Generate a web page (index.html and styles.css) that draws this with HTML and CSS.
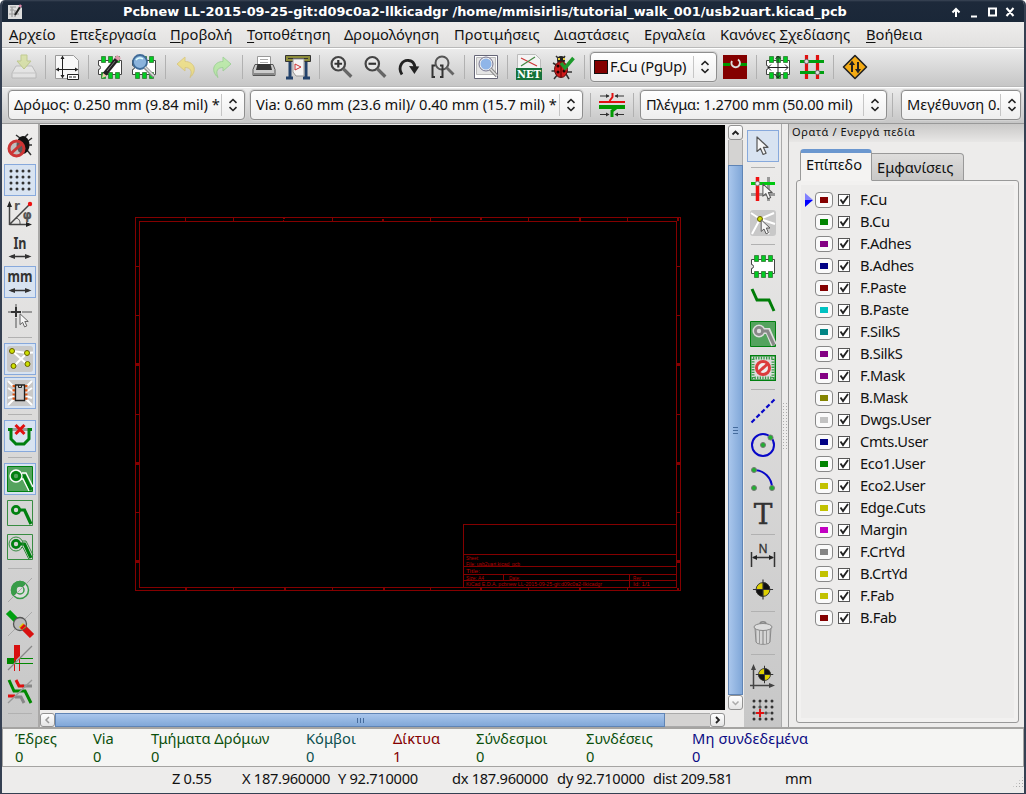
FILE: index.html
```
<!DOCTYPE html>
<html lang="el">
<head>
<meta charset="utf-8">
<title>Pcbnew</title>
<link rel="stylesheet" href="styles.css">
</head>
<body>
<svg class="defs" width="0" height="0">
  <defs>
    <symbol id="check" viewBox="0 0 14 14"><rect x="1.500" y="1.500" width="11" height="11" fill="#fff" stroke="#555"/><path d="M3.500 6.500L6 10l5-7" fill="none" stroke="#222" stroke-width="1.900"/></symbol>
    <symbol id="spin" viewBox="0 0 10 14"><path d="M1.500 4.800L5 1.500l3.500 3.300M1.500 9.200L5 12.500l3.500-3.300" fill="none" stroke="#222" stroke-width="1.600"/></symbol>
    <symbol id="target" viewBox="0 0 24 24"><circle cx="12" cy="12" r="7.200" fill="#ded000"/><path d="M12 12V4.500A7.500 7.500 0 0 1 19.500 12zM12 12v7.500A7.500 7.500 0 0 1 4.500 12z" fill="#111"/><path d="M12 1.500v21M1.500 12h21" stroke="#333" stroke-width="1.200"/><circle cx="12" cy="12" r="7.200" fill="none" stroke="#333"/></symbol>
    <symbol id="cursor" viewBox="0 0 14 20"><path d="M1 1v14.500l3.500-3 2.600 6 3-1.300-2.700-5.900H12z" fill="#f6f6f6" stroke="#555" stroke-width="1.200" stroke-linejoin="round"/></symbol>
    <symbol id="lens" viewBox="0 0 24 24"><circle cx="9.500" cy="9" r="6.200" fill="#eee" fill-opacity=".6" stroke="#454545" stroke-width="2"/><path d="M14 13.500l7.500 7.500" stroke="#666" stroke-width="3"/></symbol>
    <symbol id="chip" viewBox="0 0 26 26"><path d="M1.500 6.500h23v14h-23v-5a2 2 0 0 0 0-4z" fill="#fff" stroke="#444"/><g fill="#0c2" stroke="#373" stroke-width=".8"><path d="M4.500 2.500h4v6h-4zM11.500 2.500h4v6h-4zM18.500 2.500h4v6h-4zM4.500 18.500h4v6h-4zM11.500 18.500h4v6h-4zM18.500 18.500h4v6h-4z"/></g></symbol>
    <symbol id="zone" viewBox="0 0 26 26"><circle cx="9" cy="10" r="3.600" fill="none" stroke="currentColor" stroke-width="2.800"/><path d="M13 10h4.500L24 24" fill="none" stroke="currentColor" stroke-width="3.200"/></symbol>
  </defs>
</svg>
<div class="window">
  <header class="titlebar">
    <svg class="app-icon" viewBox="0 0 16 16"><path d="M1 1h11l3 3v11H1z" fill="#ddd"/><path d="M3 3h6M3 6h4M5 3v10M8 6v7M2 10h10" stroke="#999" stroke-width="1.200"/><path d="M13 3L8 11" stroke="#222" stroke-width="2"/><path d="M14 1l-1.500 2" stroke="#d8a" stroke-width="2.500"/></svg>
    <div class="title">Pcbnew LL-2015-09-25-git:d09c0a2-llkicadgr /home/mmisirlis/tutorial_walk_001/usb2uart.kicad_pcb</div>
    <svg class="win-controls" viewBox="0 0 66 12"><g fill="none" stroke="#fff" stroke-width="2"><path d="M5 11V3M1.500 6.500L5 3l3.500 3.500M20 10.500h6M38 2.500h7v7h-7zM55.500 2l7 8M62.500 2l-7 8"/></g></svg>
  </header>
  <nav class="menubar">
    <span><u>Α</u>ρχείο</span><span><u>Ε</u>πεξεργασία</span><span><u>Π</u>ροβολή</span><span><u>Τ</u>οποθέτηση</span><span>Δρομολόγηση</span><span>Προτιμήσεις</span><span>Δια<u>σ</u>τάσεις</span><span>Εργαλεία</span><span>Κανόνες <u>Σ</u>χεδίασης</span><span><u>Β</u>οήθεια</span>
  </nav>
  <div class="toolbar main-tools">
    <button class="tool faded"><svg viewBox="0 0 26 26"><path d="M5 12h16l4 7v5H1v-5z" fill="#eee" stroke="#aaa"/><path d="M1 19h24" stroke="#bbb"/><path d="M10 1h6v6h4l-7 8-7-8h4z" fill="#d3e08a" stroke="#a9b95a"/></svg></button>
    <i class="sep"></i>
    <button class="tool"><svg viewBox="0 0 26 26"><path d="M1.500 1.500h18l5 5v18h-23z" fill="#f8f8f8" stroke="#999"/><path d="M8.500 3v20M3 15.500h20" stroke="#222"/><path d="M6.500 5L8.500 1.500 10.500 5zM6.500 21l2 3.500 2-3.500zM5 13.500l-3.500 2L5 17.500zM21 13.500l3.500 2-3.500 2z" fill="#222"/><path d="M13.500 20.500h11v5h-11z" fill="#fff" stroke="#222"/><path d="M15 23h8" stroke="#222" stroke-dasharray="3 1"/></svg></button>
    <i class="sep"></i>
    <button class="tool"><svg viewBox="0 0 26 26"><use href="#chip"/><path d="M7 21L20 5" stroke="#222" stroke-width="4.500"/><path d="M5 24l1-5 4 3z" fill="#eca"/><path d="M10 17L18 7" stroke="#777"/><path d="M19.500 5.500L22 2.500" stroke="#d9a" stroke-width="5"/></svg></button>
    <button class="tool"><svg viewBox="0 0 26 26"><use href="#chip"/><circle cx="9" cy="8" r="7" fill="#8bb3dc" stroke="#3f6b98" stroke-width="1.800"/><path d="M5 6a5 5 0 0 1 7-1" stroke="#dff" stroke-width="1.500" fill="none"/><path d="M14 13.500l9 9" stroke="#888" stroke-width="3.500"/><path d="M14 13l9 9" stroke="#ddd" stroke-width="1.500"/></svg></button>
    <i class="sep"></i>
    <button class="tool faded"><svg viewBox="0 0 26 26"><path d="M3 10l8-7v4.500c9 0 13 9 5 16 3-7 0-10-5-10V17z" fill="#f6e05a" stroke="#d8bd50"/></svg></button>
    <button class="tool faded"><svg viewBox="0 0 26 26"><path d="M23 10l-8-7v4.500c-9 0-13 9-5 16-3-7 0-10 5-10V17z" fill="#a8f08c" stroke="#7ccb70"/></svg></button>
    <i class="sep"></i>
    <button class="tool"><svg viewBox="0 0 26 26"><path d="M6.500 12V2.500h13V12" fill="#fff" stroke="#999"/><path d="M9 5.500h8M9 8.500h8" stroke="#aaa"/><path d="M4 10.500h18l2 5v6H2v-6z" fill="#ccc" stroke="#555"/><path d="M6.500 10h13l1.500 6h-16z" fill="#333"/><path d="M3 19h20v2H3z" fill="#888"/></svg></button>
    <button class="tool"><svg viewBox="0 0 26 26"><path d="M5 6v17M21 6v17M1 24h7M18 24h7" stroke="#23426b" stroke-width="3"/><path d="M.500 1.500h25v6H.500z" fill="#8d8d3a" stroke="#333"/><path d="M3 4.500h20" stroke="#333"/><path d="M8 5h11v17h-8l-3-4z" fill="#f4f4f4" stroke="#999"/><path d="M10 10l6 3-6 3z" fill="none" stroke="#c33"/></svg></button>
    <i class="sep"></i>
    <button class="tool"><svg viewBox="0 0 24 24"><use href="#lens"/><path d="M6 9h7M9.500 5.500v7" stroke="#333" stroke-width="2"/></svg></button>
    <button class="tool"><svg viewBox="0 0 24 24"><use href="#lens"/><path d="M6 9h7" stroke="#333" stroke-width="2"/></svg></button>
    <button class="tool"><svg viewBox="0 0 24 24"><path d="M5.500 19C1 12 6 5 12 6c3.500.500 5 3 5.500 6" fill="none" stroke="#222" stroke-width="2.600"/><path d="M12 11l9.500.5-4.500 7z" fill="#222"/></svg></button>
    <button class="tool"><svg viewBox="0 0 26 26"><circle cx="12" cy="9" r="6.500" fill="#ddd" stroke="#555" stroke-width="2"/><path d="M16.500 13.500l7 7" stroke="#666" stroke-width="2.800"/><path d="M5 11.500H2.500V23H5M10 11.500h2.500V23H10" fill="none" stroke="#333" stroke-width="2"/></svg></button>
    <i class="sep"></i>
    <button class="tool"><svg viewBox="0 0 26 26"><path d="M1.500 1.500h23v23h-23z" fill="#fff" stroke="#667"/><path d="M3.500 3.500h19v17h-19z" fill="#e5e5e5" stroke="#bbb"/><circle cx="13" cy="10" r="6.500" fill="#8fb5e8" stroke="#eee" stroke-width="2"/><circle cx="13" cy="10" r="7" fill="none" stroke="#557" stroke-width=".8"/><path d="M17.500 15l6.500 7" stroke="#888" stroke-width="3.500"/><path d="M17.500 15l6.500 7" stroke="#ddd" stroke-width="1.500"/></svg></button>
    <i class="sep"></i>
    <button class="tool"><svg viewBox="0 0 26 26"><path d="M1.500.500h18l5 5v20h-23z" fill="#f4f4f4" stroke="#bbb"/><path d="M5 4l16 8" stroke="#c33" stroke-width="1.200"/><path d="M5 12L19 3" stroke="#484" stroke-width="1.200"/><path d="M0 14h26v12H0z" fill="#16723a"/><text x="13" y="24.300" text-anchor="middle" class="net-text" textLength="24" lengthAdjust="spacingAndGlyphs">NET</text></svg></button>
    <button class="tool"><svg viewBox="0 0 26 26"><path d="M3 9l5 3M1.500 17H6M4 25l4-5M19 25l-3-5M22 18h-5M6 2l4 4M15 2l-3 4" stroke="#333" stroke-width="1.500"/><circle cx="11" cy="6" r="4" fill="#222"/><path d="M8 5h2M13 5h2" stroke="#e8d040" stroke-width="2"/><ellipse cx="11" cy="15.500" rx="6.500" ry="8" fill="#d01818" stroke="#511"/><path d="M11 8v15" stroke="#500"/><g fill="#200"><circle cx="8" cy="12" r="1.500"/><circle cx="14" cy="17" r="1.500"/><circle cx="8" cy="18" r="1.500"/></g><path d="M11 9l4 5 8.500-10" fill="none" stroke="#1d9a2c" stroke-width="3.500"/></svg></button>
    <i class="sep"></i>
    <div class="combo layer-combo"><b class="layer-swatch"></b><span class="t-layer">F.Cu (PgUp)</span><svg class="arrows"><use href="#spin"/></svg></div>
    <button class="tool"><svg viewBox="0 0 26 26"><path d="M1 1h24v24H1z" fill="#840000"/><path d="M1 10.500h24" stroke="#090" stroke-width="3"/><circle cx="13" cy="10" r="5" fill="#840000"/><path d="M10 7a4.200 4.200 0 1 0 6-1.500" fill="none" stroke="#ddd" stroke-width="2"/></svg></button>
    <i class="sep"></i>
    <button class="tool"><svg viewBox="0 0 26 26"><use href="#chip"/><path d="M13 2v22M3 13.500h20" stroke="#222"/><path d="M10.500 5L13 2l2.500 3M10.500 21l2.500 3 2.500-3M6 10.500l-3 3 3 3M20 10.500l3 3-3 3" fill="none" stroke="#222"/></svg></button>
    <button class="tool"><svg viewBox="0 0 26 26"><path d="M7.500 1v24M18.500 1v24" stroke="#e01010" stroke-width="3.200"/><path d="M1 7.500h24M1 18.500h24" stroke="#00a010" stroke-width="3"/><g fill="#ddd" stroke="#666"><circle cx="7.500" cy="7.500" r="2.200"/><circle cx="18.500" cy="18.500" r="2.200"/></g></svg></button>
    <i class="sep"></i>
    <button class="tool"><svg viewBox="0 0 26 26"><path d="M13 1.500L24.500 13 13 24.500 1.500 13z" fill="#f4ab14" stroke="#222" stroke-width="1.600" stroke-linejoin="round"/><path d="M10 18V8M16 8v10" stroke="#222" stroke-width="2"/><path d="M7 11l3-4.500 3 4.500zM13 15l3 4.500 3-4.500z" fill="#222"/></svg></button>
  </div>
  <div class="toolbar aux-tools">
    <div class="combo c-track"><span class="t-track">Δρόμος: 0.250 mm (9.84 mil) *</span><svg class="arrows"><use href="#spin"/></svg></div>
    <div class="combo c-via"><span class="t-via">Via: 0.60 mm (23.6 mil)/ 0.40 mm (15.7 mil) *</span><svg class="arrows"><use href="#spin"/></svg></div>
    <i class="sep"></i>
    <button class="tool"><svg viewBox="0 0 26 26"><path d="M0 10h26" stroke="#e01010" stroke-width="2"/><path d="M0 15h26" stroke="#090" stroke-width="4"/><path d="M13.500 1v4l-3 4" fill="none" stroke="#e01010" stroke-width="2"/><path d="M17 16l-4 3v6" fill="none" stroke="#090" stroke-width="3"/><path d="M1 4h9M16 4h9M1 22.500h9M16 22.500h9" stroke="#333"/><path d="M7 2L10.500 4 7 6zM19 2L15.500 4l3.500 2zM7 20.500l3.500 2-3.500 2zM19 20.500l-3.500 2 3.500 2z" fill="#333"/></svg></button>
    <i class="sep"></i>
    <div class="combo c-grid"><span class="t-grid">Πλέγμα: 1.2700 mm (50.00 mil)</span><svg class="arrows"><use href="#spin"/></svg></div>
    <i class="sep"></i>
    <div class="combo c-zoom"><span class="t-zoom">Μεγέθυνση 0.</span><svg class="arrows"><use href="#spin"/></svg></div>
  </div>
  <main class="workspace">
    <aside class="side left-tools">
      <button class="tool"><svg viewBox="0 0 26 26"><path d="M9 2l4 3 5-1 3-3M20 12h5M20 17l4 5M21 8l4-3" stroke="#333" stroke-width="1.500" fill="none"/><ellipse cx="16" cy="12" rx="6.500" ry="9" fill="#111"/><circle cx="9.500" cy="15.500" r="7.500" fill="#999" fill-opacity=".55" stroke="#cc3535" stroke-width="3"/><path d="M4.500 20L15 10.500" stroke="#cc3535" stroke-width="3"/></svg></button>
      <button class="tool on"><svg viewBox="0 0 26 26"><path d="M4 4h20M4 10h20M4 16h20M4 22h20" stroke="#333" stroke-width="3" stroke-linecap="round" stroke-dasharray="0 6"/></svg></button>
      <button class="tool"><svg viewBox="0 0 26 26"><path d="M2.500 24V4M2.500 23.500H22M3 23L22 4" fill="none" stroke="#444" stroke-width="1.500"/><path d="M0 6l2.500-6L5 6zM19 21l6 2.500-6 2.500z" fill="#222"/><path d="M9 17c4 1 4 4 4 6" fill="none" stroke="#444"/><circle cx="23" cy="3" r="2.200" fill="#e11"/><text x="7" y="9" class="rphi">r</text><text x="15.500" y="17.500" class="rphi">φ</text></svg></button>
      <button class="tool"><svg viewBox="0 0 26 26"><text x="13" y="14" text-anchor="middle" class="unit" textLength="13" lengthAdjust="spacingAndGlyphs">In</text><path d="M4 21.500h18" stroke="#333" stroke-width="1.500"/><path d="M8 19l-6.500 2.500L8 24zM18 19l6.500 2.500L18 24z" fill="#333"/></svg></button>
      <button class="tool on"><svg viewBox="0 0 26 26"><text x="13" y="13" text-anchor="middle" class="unit" textLength="25" lengthAdjust="spacingAndGlyphs">mm</text><path d="M4 21.500h18" stroke="#333" stroke-width="1.500"/><path d="M8 19l-6.500 2.500L8 24zM18 19l6.500 2.500L18 24z" fill="#333"/></svg></button>
      <button class="tool"><svg viewBox="0 0 26 26"><path d="M1 9h3M15 9h10M9 1v3M9 15v10" stroke="#999" stroke-width="2"/><path d="M4 9h10M9 4v10" stroke="#333" stroke-width="2"/><use href="#cursor" x="12" y="10" width="11" height="15"/></svg></button>
      <i class="sep"></i>
      <button class="tool on"><svg viewBox="0 0 26 26"><rect width="26" height="26" rx="3" fill="#c9c9c9"/><path d="M5 5l15 2 6-.500M20 7L7 20M5 5l15 13" stroke="#fff" stroke-width="2" fill="none"/><g fill="#cde000" stroke="#675f00"><circle cx="5" cy="5" r="2.500"/><circle cx="20" cy="7" r="2.500"/><circle cx="6.500" cy="20" r="2.500"/><circle cx="20.500" cy="18" r="2.500"/></g></svg></button>
      <button class="tool on"><svg viewBox="0 0 26 26"><rect width="26" height="26" rx="3" fill="#c9c9c9"/><path d="M1 1l6 6M1 8l6 4M1 18l6-2M1 25l6-6M25 1l-6 6M25 8l-6 4M25 18l-6-2M25 25l-6-6" stroke="#fff" stroke-width="2"/><path d="M7 5v16M19 5v16" stroke="#d95412" stroke-width="3" stroke-dasharray="2.200 2"/><path d="M8.500 5h9v15.500h-9z" fill="#ccc" stroke="#222" stroke-width="1.300"/><path d="M11.500 5v2.500h3V5" fill="none" stroke="#222"/></svg></button>
      <i class="sep"></i>
      <button class="tool on"><svg viewBox="0 0 26 26"><path d="M1 6.500h24" stroke="#999" stroke-width="3"/><path d="M1 6.500h3V16l5 5h8l5-5V6.500h3" fill="none" stroke="#008010" stroke-width="3"/><path d="M8.500 2l9 9M17.500 2l-9 9" stroke="#e01010" stroke-width="3"/></svg></button>
      <i class="sep"></i>
      <button class="tool on"><svg viewBox="0 0 26 26"><path d="M.500.500h25v25H.500z" fill="#54a35e" stroke="#008010"/><use href="#zone" class="green"/><circle cx="9" cy="10" r="6" fill="none" stroke="#fff" stroke-width="1.300"/><path d="M15 7h4l7 14M14 13h2l6 12" fill="none" stroke="#fff" stroke-width="1.300"/></svg></button>
      <button class="tool"><svg viewBox="0 0 26 26"><path d="M.500.500h25v25H.500z" fill="none" stroke="#388c42"/><use href="#zone" class="green"/></svg></button>
      <button class="tool"><svg viewBox="0 0 26 26"><path d="M.500.500h25v25H.500z" fill="none" stroke="#388c42"/><use href="#zone" class="green"/><circle cx="9" cy="10" r="7" fill="none" stroke="#388c42"/><path d="M15 7h4l7 14M14 13.500h2l6 12" fill="none" stroke="#388c42"/></svg></button>
      <i class="sep"></i>
      <button class="tool"><svg viewBox="0 0 26 26"><circle cx="13" cy="13" r="8.500" fill="#ddd" stroke="#389c48" stroke-width="1.500"/><path d="M6.500 19.500A9 9 0 1 1 19.500 6.500z" fill="#389c48"/><circle cx="13" cy="13" r="4" fill="#ddd" stroke="#389c48" stroke-width="1.500"/><path d="M1 25L25 1" stroke="#aaa"/></svg></button>
      <button class="tool"><svg viewBox="0 0 26 26"><path d="M1 1l10 10" stroke="#00a010" stroke-width="6"/><path d="M15 15l10 10" stroke="#d81010" stroke-width="6"/><path d="M1 25L25 1" stroke="#aaa"/><circle cx="13" cy="13" r="6.500" fill="#bbb" stroke="#555" stroke-width="1.300"/><path d="M12 16l4-4 3 4-4 3z" fill="#dc0"/><path d="M14 18l4-4" stroke="#d11" stroke-width="3"/></svg></button>
      <button class="tool"><svg viewBox="0 0 26 26"><path d="M0 16h9" stroke="#080" stroke-width="6"/><path d="M7 0h6v11l-6 6z" fill="#d81010"/><path d="M7.500 17v9M12.500 14v12" stroke="#d81010"/><path d="M12 13.500h14M9 18.500h17" stroke="#080"/><path d="M1 25L25 1" stroke="#888" stroke-width="1.300"/></svg></button>
      <button class="tool"><svg viewBox="0 0 26 26"><path d="M15 7h10M8 18h6l3 6" fill="none" stroke="#888" stroke-width="3"/><path d="M9 1l3 6h5M1 17h7" fill="none" stroke="#e01010" stroke-width="3"/><path d="M2 1l5 11h11l6 12" fill="none" stroke="#080" stroke-width="3"/><path d="M1 24L25 1" stroke="#999" stroke-width="1.300"/></svg></button>
      <i class="sep"></i>
    </aside>
    <section class="editor">
      <svg class="board" viewBox="40 125 685 585">
        <g fill="none" stroke="#840000" shape-rendering="crispEdges">
          <path d="M135.500 217.500h545v373h-545zM139.500 221.500h537v366h-537z"/>
          <path d="M185.500 217v4M233.500 217v4M332.500 217v4M430.500 217v4M528.500 217v4M627.500 217v4M233.500 587v4M332.500 587v4M430.500 587v4M528.500 587v4M627.500 587v4M135 266.500h4M135 315.500h4M135 414.500h4M135 512.500h4M676 266.500h4M676 315.500h4M676 414.500h4M676 512.500h4"/>
          <path d="M463.500 587V524.500h213M463.500 554.500h213M463.500 566.500h213M463.500 574.500h213M463.500 580.500h213M503.500 574v6M629.500 574v13"/>
        </g>
        <g fill="#840000"><path d="M283 218h2v1h-2zM283 220h1v1h-1zM382 219h2v2h-2zM480 217h2v3h-2zM579 218h2v3h-2zM136 363h3v3h-3zM136 462h3v3h-3zM136 560h3v3h-3zM677 363h3v3h-3zM677 462h3v3h-3zM677 560h3v3h-3zM185 588h2v2h-2zM284 588h2v2h-2zM383 588h2v2h-2zM480 588h2v2h-2zM579 588h2v3h-2zM677 588h2v2h-2zM677 218h2v3h-2z"/></g>
        <g class="stamp">
          <text x="466" y="560" textLength="13" lengthAdjust="spacingAndGlyphs">Sheet:</text><text x="466" y="565.500" textLength="54" lengthAdjust="spacingAndGlyphs">File: usb2uart.kicad_pcb</text>
          <text x="466" y="573" textLength="14" lengthAdjust="spacingAndGlyphs">Title:</text><text x="466" y="580" textLength="18" lengthAdjust="spacingAndGlyphs">Size: A4</text><text x="509" y="580" textLength="11" lengthAdjust="spacingAndGlyphs">Date:</text><text x="633" y="580" textLength="9" lengthAdjust="spacingAndGlyphs">Rev:</text>
          <text x="466" y="585.500" textLength="136" lengthAdjust="spacingAndGlyphs">KiCad E.D.A.  pcbnew LL-2015-09-25-git:d09c0a2-llkicadgr</text><text x="633" y="585.500" textLength="17" lengthAdjust="spacingAndGlyphs">Id: 1/1</text>
        </g>
      </svg>
      <div class="vscroll"><i class="sb up"><svg viewBox="0 0 12 12"><path d="M3 7.500l3-3 3 3" fill="none" stroke="#222" stroke-width="1.800"/></svg></i><i class="v-trough"></i><i class="v-thumb"><em></em></i><i class="sb down"><svg viewBox="0 0 12 12"><path d="M3 4.500l3 3 3-3" fill="none" stroke="#aaa" stroke-width="1.500"/></svg></i></div>
      <div class="hscroll"><i class="sb"><svg viewBox="0 0 12 12"><path d="M7.500 3l-3 3 3 3" fill="none" stroke="#999" stroke-width="1.500"/></svg></i><i class="h-thumb"><em></em></i><i class="h-trough"></i><i class="sb"><svg viewBox="0 0 12 12"><path d="M4.500 3l3 3-3 3" fill="none" stroke="#222" stroke-width="1.800"/></svg></i></div>
    </section>
    <aside class="side right-tools">
      <button class="tool on"><svg viewBox="0 0 26 26"><use href="#cursor" x="6" y="3" width="14" height="20"/></svg></button>
      <i class="sep"></i>
      <button class="tool"><svg viewBox="0 0 26 26"><path d="M18.500 1v24M1 18.500h24" stroke="#999" stroke-width="3"/><path d="M7.500 1v24" stroke="#f01010" stroke-width="3.500"/><path d="M1 7.500h24" stroke="#00c810" stroke-width="3"/><circle cx="7.500" cy="7.500" r="2.200" fill="#eee" stroke="#777"/><use href="#cursor" x="12" y="7" width="12" height="17"/></svg></button>
      <button class="tool"><svg viewBox="0 0 26 26"><rect width="26" height="26" rx="3" fill="#c8c8c8"/><path d="M10 9L1 3M10 9L24 3M10 9L2 24M10 9l15 5M10 9l9 15" stroke="#fff" stroke-width="2"/><circle cx="10" cy="9" r="2.500" fill="#cde000" stroke="#675f00"/><use href="#cursor" x="10" y="9" width="12" height="16"/></svg></button>
      <i class="sep"></i>
      <button class="tool"><svg viewBox="0 0 26 26"><use href="#chip"/></svg></button>
      <button class="tool"><svg viewBox="0 0 26 26"><path d="M2 2l5 11h12l5 11" fill="none" stroke="#007d08" stroke-width="3"/></svg></button>
      <button class="tool"><svg viewBox="0 0 26 26"><path d="M.500.500h25v25H.500z" fill="#54a35e" stroke="#008010"/><path d="M9 10h9l6 14" fill="none" stroke="#ddd" stroke-width="6"/><circle cx="9" cy="10" r="6.500" fill="#ddd"/><use href="#zone" class="gray"/></svg></button>
      <button class="tool"><svg viewBox="0 0 26 26"><path d="M.700.700h24.600v24.600H.700z" fill="#ddd" stroke="#008010" stroke-width="1.400"/><path d="M3 3h20v20H3z" fill="none" stroke="#389c48" stroke-width="3" stroke-dasharray="1.300 1.300"/><circle cx="13" cy="13" r="6.500" fill="#eee" stroke="#dc3c3c" stroke-width="3"/><path d="M8.500 17L17.500 9" stroke="#dc3c3c" stroke-width="3"/></svg></button>
      <i class="sep"></i>
      <button class="tool"><svg viewBox="0 0 26 26"><path d="M1.500 24.500l23-23" stroke="#0808c8" stroke-width="2.200" stroke-dasharray="4.500 2.500"/></svg></button>
      <button class="tool"><svg viewBox="0 0 26 26"><circle cx="13" cy="13" r="11" fill="none" stroke="#0808c8" stroke-width="2"/><g fill="#20b030" stroke="#777"><circle cx="13" cy="13" r="2.500"/><circle cx="20.500" cy="5.500" r="2.500"/></g></svg></button>
      <button class="tool"><svg viewBox="0 0 26 26"><path d="M4 4c10 0 18 8 18 18" fill="none" stroke="#0808c8" stroke-width="2"/><g fill="#20b030" stroke="#777"><circle cx="4" cy="4" r="2.500"/><circle cx="4" cy="22" r="2.500"/><circle cx="22" cy="22" r="2.500"/></g></svg></button>
      <button class="tool"><svg viewBox="0 0 26 26"><text x="13" y="23.500" text-anchor="middle" class="big-t">T</text></svg></button>
      <i class="sep"></i>
      <button class="tool"><svg viewBox="0 0 26 26"><text x="13" y="10" text-anchor="middle" class="dim-n">N</text><path d="M1.500 9v15M24.500 9v15M3 14.500h20" stroke="#333" stroke-width="1.500"/><path d="M7 12l-5 2.500L7 17zM19 12l5 2.500-5 2.500z" fill="#222"/></svg></button>
      <button class="tool"><svg viewBox="0 0 26 26"><use href="#target" x="1.500" y="1" width="23" height="23"/></svg></button>
      <i class="sep"></i>
      <button class="tool"><svg viewBox="0 0 26 26"><path d="M5 8h16l-1 14c-1 3-13 3-14 0z" fill="#bbb" stroke="#888"/><path d="M8 10v13M11 10v14M15 10v14M18 10v13" stroke="#eee"/><path d="M9.500 10v13M13 10v14M16.500 10v13" stroke="#999"/><ellipse cx="13" cy="7" rx="9" ry="3.500" fill="#ddd" stroke="#888"/><path d="M10 4c0-3 6-3 6 0" fill="none" stroke="#888" stroke-width="1.500"/></svg></button>
      <i class="sep"></i>
      <button class="tool"><svg viewBox="0 0 26 26"><path d="M3.500 26V4M0 22.500h22" stroke="#444" stroke-width="1.500"/><path d="M1 7l2.500-6L6 7zM19 20l6 2.500-6 2.500z" fill="#444"/><use href="#target" x="4.500" y="1.500" width="20" height="20"/></svg></button>
      <button class="tool"><svg viewBox="0 0 26 26"><path d="M4 4h20M4 10h20M4 16h20M4 22h20" stroke="#333" stroke-width="3" stroke-linecap="round" stroke-dasharray="0 6"/><path d="M10 5v16M4 16h16" stroke="#777"/><path d="M6 16h8M10 12v8" stroke="#e01010" stroke-width="2"/></svg></button>
    </aside>
    <div class="sash"></div>
    <section class="layers-pane">
      <div class="caption">Ορατά / Ενεργά πεδία</div>
      <div class="tabs"><div class="tab active"><span>Επίπεδο</span></div><div class="tab"><span>Εμφανίσεις</span></div></div>
      <div class="layer-list">
        <div class="row current"><b class="sw c-maroon"></b><svg class="chk"><use href="#check"/></svg><span>F.Cu</span></div>
        <div class="row"><b class="sw c-green"></b><svg class="chk"><use href="#check"/></svg><span>B.Cu</span></div>
        <div class="row"><b class="sw c-purple"></b><svg class="chk"><use href="#check"/></svg><span>F.Adhes</span></div>
        <div class="row"><b class="sw c-navy"></b><svg class="chk"><use href="#check"/></svg><span>B.Adhes</span></div>
        <div class="row"><b class="sw c-maroon"></b><svg class="chk"><use href="#check"/></svg><span>F.Paste</span></div>
        <div class="row"><b class="sw c-cyan"></b><svg class="chk"><use href="#check"/></svg><span>B.Paste</span></div>
        <div class="row"><b class="sw c-teal"></b><svg class="chk"><use href="#check"/></svg><span>F.SilkS</span></div>
        <div class="row"><b class="sw c-purple"></b><svg class="chk"><use href="#check"/></svg><span>B.SilkS</span></div>
        <div class="row"><b class="sw c-purple"></b><svg class="chk"><use href="#check"/></svg><span>F.Mask</span></div>
        <div class="row"><b class="sw c-olive"></b><svg class="chk"><use href="#check"/></svg><span>B.Mask</span></div>
        <div class="row"><b class="sw c-silver"></b><svg class="chk"><use href="#check"/></svg><span>Dwgs.User</span></div>
        <div class="row"><b class="sw c-navy"></b><svg class="chk"><use href="#check"/></svg><span>Cmts.User</span></div>
        <div class="row"><b class="sw c-green"></b><svg class="chk"><use href="#check"/></svg><span>Eco1.User</span></div>
        <div class="row"><b class="sw c-yellow"></b><svg class="chk"><use href="#check"/></svg><span>Eco2.User</span></div>
        <div class="row"><b class="sw c-yellow"></b><svg class="chk"><use href="#check"/></svg><span>Edge.Cuts</span></div>
        <div class="row"><b class="sw c-magenta"></b><svg class="chk"><use href="#check"/></svg><span>Margin</span></div>
        <div class="row"><b class="sw c-gray"></b><svg class="chk"><use href="#check"/></svg><span>F.CrtYd</span></div>
        <div class="row"><b class="sw c-yellow"></b><svg class="chk"><use href="#check"/></svg><span>B.CrtYd</span></div>
        <div class="row"><b class="sw c-yellow"></b><svg class="chk"><use href="#check"/></svg><span>F.Fab</span></div>
        <div class="row"><b class="sw c-maroon"></b><svg class="chk"><use href="#check"/></svg><span>B.Fab</span></div>
      </div>
    </section>
  </main>
  <div class="messages">
    <div>Έδρες<br>0</div><div>Via<br>0</div><div>Τμήματα Δρόμων<br>0</div><div class="m-teal">Κόμβοι<br>0</div><div class="m-red">Δίκτυα<br>1</div><div>Σύνδεσμοι<br>0</div><div>Συνδέσεις<br>0</div><div class="m-blue">Μη συνδεδεμένα<br>0</div>
  </div>
  <footer class="status">
    <span>Z 0.55</span><span>X 187.960000</span><span>Y 92.710000</span><span>dx 187.960000</span><span>dy 92.710000</span><span>dist 209.581</span><span>mm</span>
    <i class="grip"></i>
  </footer>
</div>
</body>
</html>
```
FILE: styles.css
```
* { box-sizing: border-box; }
body { margin: 0; background: #fff; font: 14.670px/18px "Noto Sans", "Open Sans", sans-serif; color: #111; }
.defs { position: absolute; }
.window { width: 1026px; height: 794px; border: 2px solid #354052; border-top: 0; border-bottom-width: 1px; border-radius: 5px 5px 0 0; overflow: hidden; background: #edeceb; display: flex; flex-direction: column; white-space: nowrap; }
.titlebar { height: 22px; flex: none; background: linear-gradient(#3b4656 0, #1d293a 2px, #1a2738); color: #fff; display: flex; align-items: center; padding: 2px 0 0 5px; }
.app-icon { width: 16px; height: 16px; }
.title { font: bold 12.900px/18px "DejaVu Sans", sans-serif; margin-left: 100px; width: 830px; }
.win-controls { width: 66px; height: 12px; margin-left: -2px; flex: none; }
.menubar { height: 25px; flex: none; padding: 0 0 2px 7px; display: grid; grid-template-columns: 61px 100px 77px 97px 110px 100px 90px 76px 146px auto; align-items: center; background: linear-gradient(#eeedec, #e2e1e0); }
.menubar u { text-underline-offset: 2px; }
.toolbar { flex: none; display: flex; align-items: center; gap: 2px; padding-left: 6px; background: linear-gradient(#ececec, #c6c6c6); border-top: 1px solid #b9b9b9; box-shadow: inset 0 1px #fff; }
.main-tools { height: 39px; }
.aux-tools { height: 38px; border-bottom: 1px solid #999; }
.tool { width: 32px; height: 32px; padding: 0; border: 1px solid transparent; background: none; flex: none; display: grid; place-items: center; }
.tool svg { width: 26px; height: 26px; display: block; overflow: visible; }
.tool.on { background: #d8e3f1; border-color: #87a9dc; }
.faded { opacity: .6; }
.toolbar .sep { width: 7px; height: 24px; flex: none; background: linear-gradient(90deg, transparent 3px, #b1b1b1 3px 4px, transparent 4px); }
.side .sep { height: 7px; width: 24px; flex: none; background: linear-gradient(transparent 3px, #b1b1b1 3px 4px, transparent 4px); }
.combo { height: 30px; flex: none; display: flex; align-items: center; border: 1px solid #8e8e8e; border-radius: 4px; background: linear-gradient(#fff, #eee); box-shadow: 0 0 0 1px #d3d3d3; padding-left: 5px; }
.combo span { flex: 1; height: 20px; line-height: 19px; }
.arrows { width: 23px; height: 22px; padding: 4px 6px; border-left: 1px solid #c6c6c6; flex: none; }
.layer-combo { width: 127px; padding-left: 3px; margin-top: -1px; gap: 2px; }
.layer-swatch { width: 14px; height: 14px; background: #840000; border: 1px solid #111; }
.t-layer { letter-spacing: -.2px; }
.c-track { width: 237px; }
.t-track { letter-spacing: -.05px; }
.c-via { width: 333px; margin: 0 2px 0 3px; }
.t-via { letter-spacing: -.07px; }
.c-grid { width: 247px; margin-left: 1px; }
.t-grid { letter-spacing: -.15px; }
.c-zoom { width: 120px; margin-left: 3px; }
.c-zoom .arrows { width: 25px; padding-right: 8px; }
.net-text { font: bold 11px "DejaVu Serif", serif; fill: #fff; }
.rphi { font: bold 12px "DejaVu Sans", sans-serif; fill: #555; }
.unit { font: bold 16px "Noto Sans", sans-serif; fill: #333; }
.big-t { font: 28px "DejaVu Serif", serif; fill: #333; stroke: #333; stroke-width: .4px; }
.dim-n { font: 12px "Noto Sans", sans-serif; fill: #333; stroke: #333; stroke-width: .3px; }
.green { color: #008010; }
.gray { color: #888; }
.workspace { flex: none; height: 603px; display: flex; }
.side { display: flex; flex-direction: column; align-items: center; gap: 2px; padding-top: 6px; background: linear-gradient(#eeedec, #c7c7c7); flex: none; }
.left-tools { width: 38px; border-right: 2px solid #a9a8a7; }
.right-tools { width: 38px; border-right: 1px solid #aaa; }
.editor { width: 704px; flex: none; display: grid; grid-template: 585px 17px / 685px 19px; padding-top: 1px; background: #edeceb; }
.board { width: 685px; height: 585px; background: #000; }
.stamp { font: 6px "Liberation Sans", sans-serif; fill: #b80000; }
.vscroll { margin: 0 1px 0 3px; display: flex; flex-direction: column; }
.hscroll { margin-top: 3px; height: 14px; display: flex; }
.sb { flex: none; width: 15px; height: 15px; background: linear-gradient(#fff, #e5e5e5); border: 1px solid #929292; border-radius: 3px; display: grid; place-items: center; }
.hscroll .sb { height: 14px; }
.sb svg { width: 13px; height: 12px; }
.v-trough { height: 25px; background: #d4d3d2; border: solid #aaa; border-width: 0 1px; }
.v-thumb { flex: 1; border: 1px solid #5f84b5; background: linear-gradient(90deg, #a9c6ec, #80a7d8); display: grid; place-items: center; }
.v-thumb em { width: 5px; height: 7px; background: repeating-linear-gradient(#456b9c 0 1px, transparent 1px 3px); }
.h-thumb { width: 610px; border: 1px solid #5f84b5; background: linear-gradient(#a9c6ec, #80a7d8); display: grid; place-items: center; }
.h-thumb em { width: 7px; height: 5px; background: repeating-linear-gradient(90deg, #456b9c 0 1px, transparent 1px 3px); }
.h-trough { flex: 1; background: #d4d3d2; border: solid #aaa; border-width: 1px 0; }
.sash { width: 6px; flex: none; background: radial-gradient(circle, #aaa .7px, transparent 1px) 0 278px / 3px 3px; background-clip: content-box; padding: 278px 0 277px; }
.layers-pane { flex: 1; display: flex; flex-direction: column; border-left: 1px solid #999; padding-right: 5px; padding-bottom: 4px; background: #edeceb; }
.caption { height: 18px; flex: none; margin-right: -5px; padding-left: 3px; font-size: 11px; line-height: 16px; letter-spacing: .6px; background: linear-gradient(#c9c8c7, #e8e7e6); }
.tabs { height: 39px; flex: none; margin-left: 11px; display: flex; align-items: flex-end; margin-bottom: -1px; z-index: 1; }
.tab { height: 28px; width: 92px; border: 1px solid #999; border-left: 0; border-radius: 0 4px 0 0; background: linear-gradient(#dedddc, #c8c7c6); padding: 4px 0 0 5px; }
.tab.active { width: 72px; height: 32px; border: solid #999; border-width: 0 1px; border-top: 4px solid #6b97cf; border-bottom: 1px solid #f4f3f2; border-radius: 4px 4px 0 0; background: #f4f3f2; padding: 2px 0 0 5px; }
.layer-list { flex: 1; margin-left: 7px; border: 1px solid #999; border-radius: 3px; box-shadow: inset 0 0 0 4px #f2f1f0; padding: 8px 0 0 18px; }
.row { height: 22px; display: flex; align-items: center; position: relative; letter-spacing: -.32px; }
.row span { padding-bottom: 2px; }
.sw { width: 18px; height: 16px; border: 1px solid #888; border-radius: 4px; background: linear-gradient(currentColor, currentColor) center / 8px 6px no-repeat, #fafafa; }
.chk { width: 14px; height: 14px; margin: 0 9px 0 4px; }
.current::before { content: ""; position: absolute; left: -10px; top: 4px; width: 8px; height: 14px; background: linear-gradient(#8080ff 50%, #0000ff 50%); clip-path: polygon(0 0, 100% 50%, 0 100%); }
.c-maroon { color: #840000; } .c-green { color: #008400; } .c-purple { color: #840084; } .c-navy { color: #000084; }
.c-cyan { color: #00c2c2; } .c-teal { color: #008484; } .c-olive { color: #848400; } .c-silver { color: #c2c2c2; }
.c-yellow { color: #c2c200; } .c-magenta { color: #c200c2; } .c-gray { color: #848484; }
.messages { height: 40px; flex: none; border: solid #a5a4a2; border-width: 2px 1px 1px 1px; background: #f5f5f3; padding: 0 0 0 12px; display: grid; grid-template-columns: 78px 58px 155px 87px 83px 110px 106px auto; color: #0b4f0b; }
.m-teal { color: #0b4f4f; } .m-red { color: #840000; } .m-blue { color: #0b0b84; letter-spacing: .15px; }
.status { flex: 1; padding-left: 170px; display: grid; grid-template-columns: 70px 96px 114px 105px 96px 132px 1fr 12px; align-items: center; padding-bottom: 5px; letter-spacing: -.3px; }
.grip { width: 12px; height: 12px; align-self: end; background: radial-gradient(circle, #aaa .8px, transparent 1px) 0 0 / 3px 3px; clip-path: polygon(100% 0, 100% 100%, 0 100%); }
```
